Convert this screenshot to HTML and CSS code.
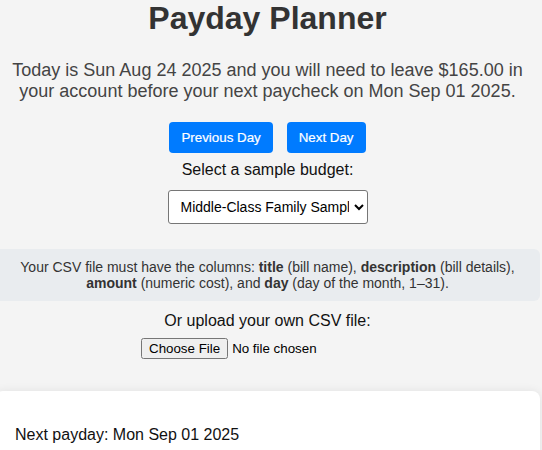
FILE: index.html
```html
<!DOCTYPE html>
<html lang="en">
<head>
<meta charset="utf-8">
<title>Payday Planner</title>
<link rel="stylesheet" href="styles.css">
</head>
<body>
<div class="page">
  <h1 class="title">Payday Planner</h1>
  <p class="summary">Today is Sun Aug 24 2025 and you will need to leave $165.00 in your account before your next paycheck on Mon Sep 01 2025.</p>
  <div class="nav">
    <button class="btn" type="button">Previous Day</button>
    <button class="btn" type="button">Next Day</button>
  </div>
  <label class="label label-select" for="budget">Select a sample budget:</label>
  <div class="select-row">
    <select id="budget" class="select">
      <option>Middle-Class Family Sample</option>
      <option>Single Student Sample</option>
    </select>
  </div>
  <div class="info">Your CSV file must have the columns: <b>title</b> (bill name), <b>description</b> (bill details), <b>amount</b> (numeric cost), and <b>day</b> (day of the month, 1–31).</div>
  <label class="label label-upload" for="csv">Or upload your own CSV file:</label>
  <div class="file-row">
    <input id="csv" class="file" type="file" accept=".csv">
  </div>
  <div class="card">
    <p class="payday">Next payday: Mon Sep 01 2025</p>
  </div>
</div>
</body>
</html>
```

FILE: styles.css
```css
html, body {
  margin: 0;
  padding: 0;
  background: #f4f4f4;
  overflow: hidden;
}
body {
  font-family: "Liberation Sans", Arial, sans-serif;
  color: #222;
}
.page {
  margin-left: -5px;
  width: 545px;
  text-align: center;
}
.title {
  margin: 0;
  font-size: 32px;
  font-weight: bold;
  color: #333;
  line-height: normal;
}
.summary {
  margin: 23px 0 0;
  padding: 0 10px;
  font-size: 18px;
  color: #444;
}
.nav {
  display: flex;
  justify-content: center;
  gap: 14px;
  margin-top: 20px;
}
.btn {
  font-family: "Liberation Sans", Arial, sans-serif;
  font-size: 13.33px;
  line-height: normal;
  padding: 8px 12px;
  border: none;
  border-radius: 4px;
  background: #007bff;
  color: #fff;
  -webkit-text-stroke: 0.2px #fff;
}
.label {
  display: block;
  font-size: 16px;
  color: #111;
}
.label-select {
  margin-top: 8px;
}
.select-row {
  margin-top: 11px;
}
.select {
  width: 200px;
  height: 34px;
  padding: 0 2px 0 8px;
  font-family: "Liberation Sans", Arial, sans-serif;
  font-size: 14px;
  color: #000;
  background: #fff;
  border: 1px solid #767676;
  border-radius: 3px;
}
.info {
  margin-top: 25px;
  padding: 10px 15px;
  background: #e9ecef;
  border-radius: 6px;
  font-size: 14px;
  line-height: normal;
  color: #333;
}
.label-upload {
  margin-top: 11px;
}
.file-row {
  margin-top: 8px;
}
.file {
  font-family: "Liberation Sans", Arial, sans-serif;
  font-size: 13.33px;
  color: #000;
}
.card {
  margin-top: 32px;
  padding: 20px 20px 20px;
  background: #fff;
  border-radius: 8px;
  box-shadow: 0 0 10px rgba(0, 0, 0, 0.08);
  text-align: left;
}
.payday {
  margin: 15px 0 16px;
  font-size: 16px;
  color: #111;
}
```
